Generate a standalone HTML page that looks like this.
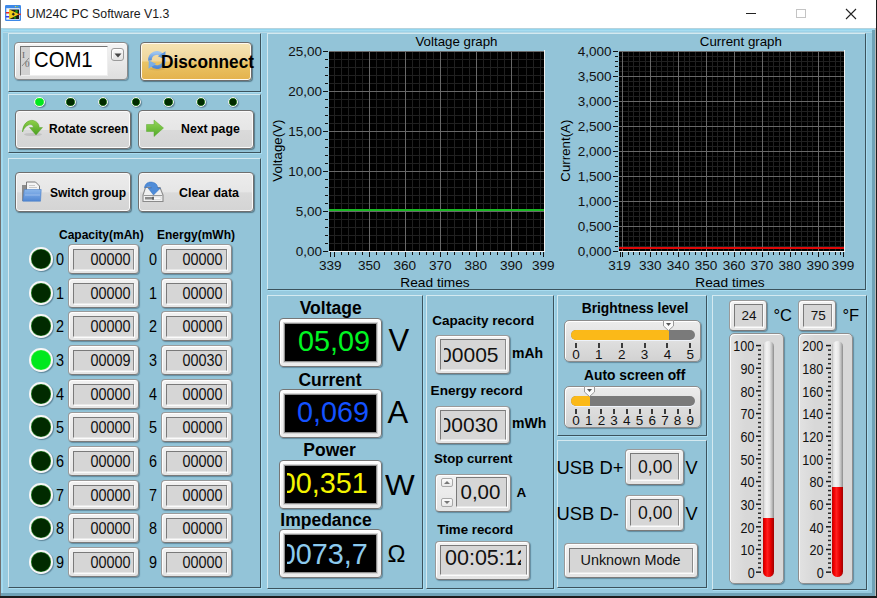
<!DOCTYPE html><html><head><meta charset="utf-8"><style>
*{margin:0;padding:0;box-sizing:border-box}
html,body{width:877px;height:598px;overflow:hidden;background:#fff;font-family:"Liberation Sans",sans-serif}
.t{position:absolute;white-space:nowrap;line-height:1}
.pn{position:absolute;background:#93c4d8;border-top:1px solid #d4e9f0;border-left:1px solid #d4e9f0;border-right:1px solid #3c535d;border-bottom:1px solid #3c535d;box-shadow:1px 1px 0 #a8dcf0}
.btn{position:absolute;border:1px solid #6f6f6f;border-radius:4px;background:linear-gradient(#ececec 0%,#e6e6e6 50%,#dadada 52%,#d4d4d4 100%);box-shadow:inset 0 0 0 1px #fafafa, 1px 1px 1px rgba(30,50,60,.5)}
.nb{position:absolute;border:1px solid;border-color:#9a9a9a #888 #7a7a7a #9a9a9a;border-radius:4px;background:linear-gradient(#f2f2f2,#e4e4e4);box-shadow:inset 1px 1px 0 #fff,1px 1px 1px rgba(40,70,90,.45)}
.nbi{position:absolute;background:#d6d6d6;border-top:1px solid #7a7a7a;border-left:1px solid #7a7a7a;border-right:1px solid #8a8a8a;border-bottom:1px solid #e8e8e8;box-shadow:1px 1px 0 #fbfbfb}
.led{position:absolute;border-radius:50%;border:1.5px solid #f6f6f6}
svg{position:absolute;left:0;top:0}
</style></head><body>
<div style="position:absolute;left:0;top:28px;width:877px;height:570px;background:#97cadf"></div>
<div style="position:absolute;left:0;top:0;width:1px;height:596px;background:#707070"></div>
<div style="position:absolute;left:876px;top:0;width:1px;height:598px;background:#1c1c1c"></div>
<div style="position:absolute;left:875px;top:28px;width:1px;height:568px;background:#b8b8b8"></div>
<div style="position:absolute;left:1px;top:28px;width:874px;height:5px;background:linear-gradient(#b6d2dc 0,#b6d2dc 1px,#92d6f0 1px,#92d6f0 2px,#a6dcf0 2px,#a6dcf0 3px,#9cd2e8 3px,#9cd2e8 4px,#b4d8e6 4px)"></div>
<div style="position:absolute;left:1px;top:28px;width:2px;height:568px;background:#a2daf0"></div>
<div style="position:absolute;left:872px;top:30px;width:3px;height:566px;background:#6fa2b6"></div>
<div style="position:absolute;left:1px;top:593px;width:874px;height:3px;background:#6fa2b6"></div>
<div style="position:absolute;left:0;top:596px;width:877px;height:2px;background:#1c1c1c"></div>
<svg width="16" height="16" style="left:5px;top:5px" viewBox="0 0 16 16"><rect x="0" y="0" width="16" height="16" rx="1.2" fill="#3d88e8"/><rect x="1.3" y="3.2" width="13.4" height="11.5" fill="#f0f6fd"/><circle cx="10.5" cy="1.6" r="0.7" fill="#e8e040"/><circle cx="12.5" cy="1.6" r="0.7" fill="#80d040"/><rect x="4.5" y="4.5" width="9.5" height="9.5" fill="#1c1c1c"/><circle cx="11.5" cy="6.5" r="1.4" fill="#1a8a1a"/><circle cx="10" cy="12.8" r="1.2" fill="#1a8a1a"/><path d="M4 4.3 L14.2 9.2 L4 14.2Z" fill="#f0cc18"/><path d="M8.3 7.6 L9.9 9.2 L8.3 10.8 L6.7 9.2Z" fill="#222"/><rect x="0.8" y="7" width="3.4" height="1.5" fill="#e82828"/><rect x="0.8" y="11" width="3.4" height="1.5" fill="#3838e8"/><rect x="13.4" y="8.6" width="2.4" height="1.5" fill="#e82828"/></svg>
<div class="t" style="left:26.5px;top:8.19px;font-size:12.3px;font-weight:normal;color:#1a1a1a;">UM24C PC Software V1.3</div>
<div style="position:absolute;left:746px;top:13px;width:10px;height:1px;background:#222"></div>
<div style="position:absolute;left:796px;top:9px;width:10px;height:9px;border:1px solid #c4c4c4"></div>
<svg width="12" height="12" style="left:845px;top:8px" viewBox="0 0 12 12"><path d="M1 1 L11 11 M11 1 L1 11" stroke="#222" stroke-width="1.1"/></svg>
<div class="pn" style="left:8px;top:33px;width:253px;height:59px"></div>
<div class="pn" style="left:8px;top:94px;width:253px;height:59px"></div>
<div class="pn" style="left:8px;top:158px;width:253px;height:430px"></div>
<div class="pn" style="left:267px;top:33px;width:599px;height:257px"></div>
<div class="pn" style="left:267px;top:295px;width:156px;height:294px"></div>
<div class="pn" style="left:426px;top:295px;width:128px;height:294px"></div>
<div class="pn" style="left:557px;top:295px;width:150px;height:141px"></div>
<div class="pn" style="left:557px;top:440px;width:150px;height:148px"></div>
<div class="pn" style="left:712px;top:295px;width:155px;height:295px"></div>
<div style="position:absolute;left:14px;top:42px;width:114px;height:38px;border:1px solid #8a8a8a;border-radius:4px;background:linear-gradient(#f4f4f4,#dedede);box-shadow:inset 1px 1px 0 #fff,1px 1px 1px rgba(40,70,90,.45)"></div>
<div style="position:absolute;left:20px;top:46px;width:88px;height:30px;background:#fff;border-top:1px solid #747474;border-left:1px solid #747474;border-right:1px solid #eee;border-bottom:1px solid #eee"></div>
<div style="position:absolute;left:21px;top:47px;width:9px;height:28px;background:#d2d2d2"></div>
<div class="t" style="left:22px;top:51px;font-family:'Liberation Serif',serif;font-size:9px;color:#666;line-height:1">I</div>
<svg width="10" height="14" style="left:21px;top:55px"><path d="M1 11 L8 3" stroke="#777" stroke-width="0.8"/></svg>
<div class="t" style="left:25px;top:60px;font-family:'Liberation Serif',serif;font-size:9px;color:#666;line-height:1">0</div>
<div class="t" style="left:33.5px;top:49.44px;font-size:22.4px;font-weight:normal;color:#000;transform:scaleX(0.905);transform-origin:left;">COM1</div>
<div style="position:absolute;left:111px;top:48px;width:13px;height:13px;border:1px solid #9a9a9a;border-radius:3px;background:linear-gradient(#fafafa,#e2e2e2);box-shadow:inset 1px 1px 0 #fff"></div>
<svg width="8" height="5" style="left:114px;top:53px"><path d="M0.5 0.5 L7.5 0.5 L4 4.5Z" fill="#444"/></svg>
<div style="position:absolute;left:140px;top:42px;width:112px;height:39px;border:1px solid #6c6c6c;border-radius:4px;background:linear-gradient(#f5e4b4 0%,#f0d69c 48%,#eac466 52%,#e4b24c 100%);box-shadow:inset 0 0 0 1px #fffaf0,1px 1px 1px rgba(30,50,60,.5)"></div>
<svg width="24" height="24" style="left:145px;top:48px" viewBox="0 0 24 24">
<defs><linearGradient id="rg" x1="0" y1="0" x2="0" y2="1"><stop offset="0" stop-color="#9cc4f0"/><stop offset="1" stop-color="#4f88d6"/></linearGradient></defs>
<ellipse cx="12" cy="21" rx="8" ry="1.5" fill="rgba(120,80,0,0.12)"/>
<path d="M5 12.5 A7 7 0 0 1 17.2 7.3" fill="none" stroke="url(#rg)" stroke-width="3.6"/>
<path d="M20.5 3.2 L20.2 11.5 L12.8 8.2Z" fill="#5f96dc"/>
<path d="M19 11.5 A7 7 0 0 1 6.8 16.7" fill="none" stroke="url(#rg)" stroke-width="3.6"/>
<path d="M3.5 20.8 L3.8 12.5 L11.2 15.8Z" fill="#7aaee6"/>
</svg>
<div class="t" style="left:161px;top:54.03px;font-size:17.8px;font-weight:bold;color:#000;transform:scaleX(0.97);transform-origin:left;">Disconnect</div>
<div class="led" style="left:34.0px;top:96.8px;width:10.5px;height:10.5px;background:#00e81e;border-width:1.5px;box-shadow:inset 0 0 0 0.6px #40f040,1px 1px 1px rgba(30,60,80,.45)"></div>
<div class="led" style="left:65.0px;top:96.8px;width:10.5px;height:10.5px;background:#012a00;border-width:1.5px;box-shadow:inset 0 0 0 0.6px #2a9a2a,1px 1px 1px rgba(30,60,80,.45)"></div>
<div class="led" style="left:97.8px;top:96.8px;width:10.5px;height:10.5px;background:#012a00;border-width:1.5px;box-shadow:inset 0 0 0 0.6px #2a9a2a,1px 1px 1px rgba(30,60,80,.45)"></div>
<div class="led" style="left:130.6px;top:96.8px;width:10.5px;height:10.5px;background:#012a00;border-width:1.5px;box-shadow:inset 0 0 0 0.6px #2a9a2a,1px 1px 1px rgba(30,60,80,.45)"></div>
<div class="led" style="left:163.1px;top:96.8px;width:10.5px;height:10.5px;background:#012a00;border-width:1.5px;box-shadow:inset 0 0 0 0.6px #2a9a2a,1px 1px 1px rgba(30,60,80,.45)"></div>
<div class="led" style="left:195.8px;top:96.8px;width:10.5px;height:10.5px;background:#012a00;border-width:1.5px;box-shadow:inset 0 0 0 0.6px #2a9a2a,1px 1px 1px rgba(30,60,80,.45)"></div>
<div class="led" style="left:227.8px;top:96.8px;width:10.5px;height:10.5px;background:#012a00;border-width:1.5px;box-shadow:inset 0 0 0 0.6px #2a9a2a,1px 1px 1px rgba(30,60,80,.45)"></div>
<div class="btn" style="left:15px;top:110px;width:116px;height:39px"></div>
<div class="btn" style="left:138px;top:110px;width:116px;height:39px"></div>
<svg width="24" height="20" style="left:20px;top:117px" viewBox="0 0 24 20">
<defs><linearGradient id="gg" x1="0" y1="0" x2="0" y2="1"><stop offset="0" stop-color="#8ed04a"/><stop offset="1" stop-color="#4aa020"/></linearGradient></defs>
<ellipse cx="13" cy="17.5" rx="9" ry="1.6" fill="rgba(0,0,0,0.10)"/>
<path d="M2.5 15 C2.5 7 8 2.5 13.5 3.5 C17 4.2 19 7 19.3 10.5 L22.5 10.5 L16 18 L9.5 10.5 L13.5 10.5 C13 8 11 7 8.5 8 C6 9 3.8 11.5 2.5 15Z" fill="url(#gg)" stroke="#4e9a22" stroke-width="0.4"/>
</svg>
<div class="t" style="left:49px;top:122.84px;font-size:12px;font-weight:bold;color:#000;">Rotate screen</div>
<svg width="20" height="19" style="left:145px;top:119px" viewBox="0 0 20 19">
<defs><linearGradient id="ng" x1="0" y1="0" x2="0" y2="1"><stop offset="0" stop-color="#96d65a"/><stop offset="1" stop-color="#52aa28"/></linearGradient></defs>
<path d="M1.5 5.5 L9 5.5 L9 1 L18.5 9 L9 17.5 L9 12.5 L1.5 12.5Z" fill="url(#ng)" stroke="#5aa830" stroke-width="0.5"/>
</svg>
<div class="t" style="left:181px;top:122.59px;font-size:12.3px;font-weight:bold;color:#000;">Next page</div>
<div class="btn" style="left:15px;top:172px;width:116px;height:40px"></div>
<div class="btn" style="left:138px;top:172px;width:116px;height:40px"></div>
<svg width="24" height="24" style="left:20px;top:180px" viewBox="0 0 24 24">
<defs><linearGradient id="fg" x1="0" y1="0" x2="0" y2="1"><stop offset="0" stop-color="#8ab6ea"/><stop offset="0.5" stop-color="#6d9ee0"/><stop offset="1" stop-color="#5187d2"/></linearGradient></defs>
<rect x="2" y="5" width="5" height="16" fill="#8c8c8c"/>
<path d="M6.5 2 L15.5 2 L19.5 6 L19.5 13 L6.5 13Z" fill="#f4f4f4" stroke="#6e6e6e" stroke-width="0.9"/>
<rect x="9" y="5" width="6" height="1" fill="#c8c8c8"/><rect x="9" y="7" width="8" height="1" fill="#c8c8c8"/>
<path d="M4.3 9.5 L21.2 9.5 L20.5 21.2 L2.8 21.2Z" fill="url(#fg)" stroke="#4a7fc8" stroke-width="0.6"/>
<rect x="5" y="14.5" width="15" height="1" fill="#a6c6f0" opacity="0.8"/>
</svg>
<div class="t" style="left:50px;top:186.84px;font-size:12px;font-weight:bold;color:#000;">Switch group</div>
<svg width="24" height="24" style="left:142px;top:179px" viewBox="0 0 24 24">
<path d="M3.5 8.5 L18 8.5 L21 16 L21 22.5 L1 22.5 L1 16Z" fill="#f0f0f0" stroke="#8a8a8a" stroke-width="1.1"/>
<rect x="1.5" y="16" width="19" height="1" fill="#9a9a9a"/>
<rect x="3" y="18" width="8" height="2.5" fill="#8a8a8a"/>
<rect x="11" y="18" width="8" height="2.5" fill="#fafafa" stroke="#bbb" stroke-width="0.4"/>
<rect x="10.5" y="17.8" width="1.2" height="3" fill="#333"/>
<path d="M2.5 9 C3 3 9 1.5 13.5 4.5 C15 5.5 15.5 7 15.8 9 L18.5 9 L11.5 16 L6 9 L9.5 9 C9 7.5 7 6.5 2.5 9Z" fill="#4f8cd8" stroke="#336fbf" stroke-width="0.5"/>
</svg>
<div class="t" style="left:179px;top:186.50px;font-size:12.4px;font-weight:bold;color:#000;">Clear data</div>
<div class="t" style="left:59px;top:228.64px;font-size:12px;font-weight:bold;color:#000;">Capacity(mAh)</div>
<div class="t" style="left:157px;top:228.64px;font-size:12px;font-weight:bold;color:#000;">Energy(mWh)</div>
<div class="led" style="left:29.0px;top:247.2px;width:23.5px;height:23.5px;background:#012a00;border-width:2px;box-shadow:inset 0 0 0 0.6px #2a9a2a,1px 1px 1px rgba(30,60,80,.45)"></div>
<div class="t" style="left:56px;top:252.06px;font-size:16px;font-weight:normal;color:#000;transform:scaleX(0.9);transform-origin:left;">0</div>
<div class="nb" style="left:68px;top:244px;width:71px;height:30px"></div>
<div class="nbi" style="left:73px;top:249px;width:61px;height:21px"></div>
<div class="t" style="right:747px;top:252.06px;font-size:16px;font-weight:normal;color:#111;text-align:right;transform:scaleX(0.9);transform-origin:right;">00000</div>
<div class="t" style="left:149px;top:252.06px;font-size:16px;font-weight:normal;color:#000;transform:scaleX(0.9);transform-origin:left;">0</div>
<div class="nb" style="left:161px;top:244px;width:71px;height:30px"></div>
<div class="nbi" style="left:166px;top:249px;width:61px;height:21px"></div>
<div class="t" style="right:654.5px;top:252.06px;font-size:16px;font-weight:normal;color:#111;text-align:right;transform:scaleX(0.9);transform-origin:right;">00000</div>
<div class="led" style="left:29.0px;top:281.2px;width:23.5px;height:23.5px;background:#012a00;border-width:2px;box-shadow:inset 0 0 0 0.6px #2a9a2a,1px 1px 1px rgba(30,60,80,.45)"></div>
<div class="t" style="left:56px;top:286.06px;font-size:16px;font-weight:normal;color:#000;transform:scaleX(0.9);transform-origin:left;">1</div>
<div class="nb" style="left:68px;top:278px;width:71px;height:30px"></div>
<div class="nbi" style="left:73px;top:283px;width:61px;height:21px"></div>
<div class="t" style="right:747px;top:286.06px;font-size:16px;font-weight:normal;color:#111;text-align:right;transform:scaleX(0.9);transform-origin:right;">00000</div>
<div class="t" style="left:149px;top:286.06px;font-size:16px;font-weight:normal;color:#000;transform:scaleX(0.9);transform-origin:left;">1</div>
<div class="nb" style="left:161px;top:278px;width:71px;height:30px"></div>
<div class="nbi" style="left:166px;top:283px;width:61px;height:21px"></div>
<div class="t" style="right:654.5px;top:286.06px;font-size:16px;font-weight:normal;color:#111;text-align:right;transform:scaleX(0.9);transform-origin:right;">00000</div>
<div class="led" style="left:29.0px;top:314.2px;width:23.5px;height:23.5px;background:#012a00;border-width:2px;box-shadow:inset 0 0 0 0.6px #2a9a2a,1px 1px 1px rgba(30,60,80,.45)"></div>
<div class="t" style="left:56px;top:319.06px;font-size:16px;font-weight:normal;color:#000;transform:scaleX(0.9);transform-origin:left;">2</div>
<div class="nb" style="left:68px;top:311px;width:71px;height:30px"></div>
<div class="nbi" style="left:73px;top:316px;width:61px;height:21px"></div>
<div class="t" style="right:747px;top:319.06px;font-size:16px;font-weight:normal;color:#111;text-align:right;transform:scaleX(0.9);transform-origin:right;">00000</div>
<div class="t" style="left:149px;top:319.06px;font-size:16px;font-weight:normal;color:#000;transform:scaleX(0.9);transform-origin:left;">2</div>
<div class="nb" style="left:161px;top:311px;width:71px;height:30px"></div>
<div class="nbi" style="left:166px;top:316px;width:61px;height:21px"></div>
<div class="t" style="right:654.5px;top:319.06px;font-size:16px;font-weight:normal;color:#111;text-align:right;transform:scaleX(0.9);transform-origin:right;">00000</div>
<div class="led" style="left:29.0px;top:348.2px;width:23.5px;height:23.5px;background:#00e81e;border-width:2px;box-shadow:inset 0 0 0 0.6px #40f040,1px 1px 1px rgba(30,60,80,.45)"></div>
<div class="t" style="left:56px;top:353.06px;font-size:16px;font-weight:normal;color:#000;transform:scaleX(0.9);transform-origin:left;">3</div>
<div class="nb" style="left:68px;top:345px;width:71px;height:30px"></div>
<div class="nbi" style="left:73px;top:350px;width:61px;height:21px"></div>
<div class="t" style="right:747px;top:353.06px;font-size:16px;font-weight:normal;color:#111;text-align:right;transform:scaleX(0.9);transform-origin:right;">00009</div>
<div class="t" style="left:149px;top:353.06px;font-size:16px;font-weight:normal;color:#000;transform:scaleX(0.9);transform-origin:left;">3</div>
<div class="nb" style="left:161px;top:345px;width:71px;height:30px"></div>
<div class="nbi" style="left:166px;top:350px;width:61px;height:21px"></div>
<div class="t" style="right:654.5px;top:353.06px;font-size:16px;font-weight:normal;color:#111;text-align:right;transform:scaleX(0.9);transform-origin:right;">00030</div>
<div class="led" style="left:29.0px;top:382.2px;width:23.5px;height:23.5px;background:#012a00;border-width:2px;box-shadow:inset 0 0 0 0.6px #2a9a2a,1px 1px 1px rgba(30,60,80,.45)"></div>
<div class="t" style="left:56px;top:387.06px;font-size:16px;font-weight:normal;color:#000;transform:scaleX(0.9);transform-origin:left;">4</div>
<div class="nb" style="left:68px;top:379px;width:71px;height:30px"></div>
<div class="nbi" style="left:73px;top:384px;width:61px;height:21px"></div>
<div class="t" style="right:747px;top:387.06px;font-size:16px;font-weight:normal;color:#111;text-align:right;transform:scaleX(0.9);transform-origin:right;">00000</div>
<div class="t" style="left:149px;top:387.06px;font-size:16px;font-weight:normal;color:#000;transform:scaleX(0.9);transform-origin:left;">4</div>
<div class="nb" style="left:161px;top:379px;width:71px;height:30px"></div>
<div class="nbi" style="left:166px;top:384px;width:61px;height:21px"></div>
<div class="t" style="right:654.5px;top:387.06px;font-size:16px;font-weight:normal;color:#111;text-align:right;transform:scaleX(0.9);transform-origin:right;">00000</div>
<div class="led" style="left:29.0px;top:415.2px;width:23.5px;height:23.5px;background:#012a00;border-width:2px;box-shadow:inset 0 0 0 0.6px #2a9a2a,1px 1px 1px rgba(30,60,80,.45)"></div>
<div class="t" style="left:56px;top:420.06px;font-size:16px;font-weight:normal;color:#000;transform:scaleX(0.9);transform-origin:left;">5</div>
<div class="nb" style="left:68px;top:412px;width:71px;height:30px"></div>
<div class="nbi" style="left:73px;top:417px;width:61px;height:21px"></div>
<div class="t" style="right:747px;top:420.06px;font-size:16px;font-weight:normal;color:#111;text-align:right;transform:scaleX(0.9);transform-origin:right;">00000</div>
<div class="t" style="left:149px;top:420.06px;font-size:16px;font-weight:normal;color:#000;transform:scaleX(0.9);transform-origin:left;">5</div>
<div class="nb" style="left:161px;top:412px;width:71px;height:30px"></div>
<div class="nbi" style="left:166px;top:417px;width:61px;height:21px"></div>
<div class="t" style="right:654.5px;top:420.06px;font-size:16px;font-weight:normal;color:#111;text-align:right;transform:scaleX(0.9);transform-origin:right;">00000</div>
<div class="led" style="left:29.0px;top:449.2px;width:23.5px;height:23.5px;background:#012a00;border-width:2px;box-shadow:inset 0 0 0 0.6px #2a9a2a,1px 1px 1px rgba(30,60,80,.45)"></div>
<div class="t" style="left:56px;top:454.06px;font-size:16px;font-weight:normal;color:#000;transform:scaleX(0.9);transform-origin:left;">6</div>
<div class="nb" style="left:68px;top:446px;width:71px;height:30px"></div>
<div class="nbi" style="left:73px;top:451px;width:61px;height:21px"></div>
<div class="t" style="right:747px;top:454.06px;font-size:16px;font-weight:normal;color:#111;text-align:right;transform:scaleX(0.9);transform-origin:right;">00000</div>
<div class="t" style="left:149px;top:454.06px;font-size:16px;font-weight:normal;color:#000;transform:scaleX(0.9);transform-origin:left;">6</div>
<div class="nb" style="left:161px;top:446px;width:71px;height:30px"></div>
<div class="nbi" style="left:166px;top:451px;width:61px;height:21px"></div>
<div class="t" style="right:654.5px;top:454.06px;font-size:16px;font-weight:normal;color:#111;text-align:right;transform:scaleX(0.9);transform-origin:right;">00000</div>
<div class="led" style="left:29.0px;top:483.2px;width:23.5px;height:23.5px;background:#012a00;border-width:2px;box-shadow:inset 0 0 0 0.6px #2a9a2a,1px 1px 1px rgba(30,60,80,.45)"></div>
<div class="t" style="left:56px;top:488.06px;font-size:16px;font-weight:normal;color:#000;transform:scaleX(0.9);transform-origin:left;">7</div>
<div class="nb" style="left:68px;top:480px;width:71px;height:30px"></div>
<div class="nbi" style="left:73px;top:485px;width:61px;height:21px"></div>
<div class="t" style="right:747px;top:488.06px;font-size:16px;font-weight:normal;color:#111;text-align:right;transform:scaleX(0.9);transform-origin:right;">00000</div>
<div class="t" style="left:149px;top:488.06px;font-size:16px;font-weight:normal;color:#000;transform:scaleX(0.9);transform-origin:left;">7</div>
<div class="nb" style="left:161px;top:480px;width:71px;height:30px"></div>
<div class="nbi" style="left:166px;top:485px;width:61px;height:21px"></div>
<div class="t" style="right:654.5px;top:488.06px;font-size:16px;font-weight:normal;color:#111;text-align:right;transform:scaleX(0.9);transform-origin:right;">00000</div>
<div class="led" style="left:29.0px;top:516.2px;width:23.5px;height:23.5px;background:#012a00;border-width:2px;box-shadow:inset 0 0 0 0.6px #2a9a2a,1px 1px 1px rgba(30,60,80,.45)"></div>
<div class="t" style="left:56px;top:521.06px;font-size:16px;font-weight:normal;color:#000;transform:scaleX(0.9);transform-origin:left;">8</div>
<div class="nb" style="left:68px;top:513px;width:71px;height:30px"></div>
<div class="nbi" style="left:73px;top:518px;width:61px;height:21px"></div>
<div class="t" style="right:747px;top:521.06px;font-size:16px;font-weight:normal;color:#111;text-align:right;transform:scaleX(0.9);transform-origin:right;">00000</div>
<div class="t" style="left:149px;top:521.06px;font-size:16px;font-weight:normal;color:#000;transform:scaleX(0.9);transform-origin:left;">8</div>
<div class="nb" style="left:161px;top:513px;width:71px;height:30px"></div>
<div class="nbi" style="left:166px;top:518px;width:61px;height:21px"></div>
<div class="t" style="right:654.5px;top:521.06px;font-size:16px;font-weight:normal;color:#111;text-align:right;transform:scaleX(0.9);transform-origin:right;">00000</div>
<div class="led" style="left:29.0px;top:550.2px;width:23.5px;height:23.5px;background:#012a00;border-width:2px;box-shadow:inset 0 0 0 0.6px #2a9a2a,1px 1px 1px rgba(30,60,80,.45)"></div>
<div class="t" style="left:56px;top:555.06px;font-size:16px;font-weight:normal;color:#000;transform:scaleX(0.9);transform-origin:left;">9</div>
<div class="nb" style="left:68px;top:547px;width:71px;height:30px"></div>
<div class="nbi" style="left:73px;top:552px;width:61px;height:21px"></div>
<div class="t" style="right:747px;top:555.06px;font-size:16px;font-weight:normal;color:#111;text-align:right;transform:scaleX(0.9);transform-origin:right;">00000</div>
<div class="t" style="left:149px;top:555.06px;font-size:16px;font-weight:normal;color:#000;transform:scaleX(0.9);transform-origin:left;">9</div>
<div class="nb" style="left:161px;top:547px;width:71px;height:30px"></div>
<div class="nbi" style="left:166px;top:552px;width:61px;height:21px"></div>
<div class="t" style="right:654.5px;top:555.06px;font-size:16px;font-weight:normal;color:#111;text-align:right;transform:scaleX(0.9);transform-origin:right;">00000</div>
<svg width="877" height="598" style="left:0;top:0" shape-rendering="crispEdges">
<rect x="329" y="51" width="215" height="200" fill="#000"/>
<rect x="334" y="51" width="1" height="200" fill="#202020"/>
<rect x="341" y="51" width="1" height="200" fill="#202020"/>
<rect x="348" y="51" width="1" height="200" fill="#202020"/>
<rect x="355" y="51" width="1" height="200" fill="#202020"/>
<rect x="362" y="51" width="1" height="200" fill="#202020"/>
<rect x="369" y="51" width="1" height="200" fill="#202020"/>
<rect x="376" y="51" width="1" height="200" fill="#202020"/>
<rect x="384" y="51" width="1" height="200" fill="#202020"/>
<rect x="391" y="51" width="1" height="200" fill="#202020"/>
<rect x="398" y="51" width="1" height="200" fill="#202020"/>
<rect x="405" y="51" width="1" height="200" fill="#202020"/>
<rect x="412" y="51" width="1" height="200" fill="#202020"/>
<rect x="419" y="51" width="1" height="200" fill="#202020"/>
<rect x="426" y="51" width="1" height="200" fill="#202020"/>
<rect x="433" y="51" width="1" height="200" fill="#202020"/>
<rect x="440" y="51" width="1" height="200" fill="#202020"/>
<rect x="447" y="51" width="1" height="200" fill="#202020"/>
<rect x="454" y="51" width="1" height="200" fill="#202020"/>
<rect x="462" y="51" width="1" height="200" fill="#202020"/>
<rect x="469" y="51" width="1" height="200" fill="#202020"/>
<rect x="476" y="51" width="1" height="200" fill="#202020"/>
<rect x="483" y="51" width="1" height="200" fill="#202020"/>
<rect x="490" y="51" width="1" height="200" fill="#202020"/>
<rect x="497" y="51" width="1" height="200" fill="#202020"/>
<rect x="504" y="51" width="1" height="200" fill="#202020"/>
<rect x="511" y="51" width="1" height="200" fill="#202020"/>
<rect x="518" y="51" width="1" height="200" fill="#202020"/>
<rect x="526" y="51" width="1" height="200" fill="#202020"/>
<rect x="533" y="51" width="1" height="200" fill="#202020"/>
<rect x="540" y="51" width="1" height="200" fill="#202020"/>
<rect x="329" y="243" width="215" height="1" fill="#202020"/>
<rect x="329" y="235" width="215" height="1" fill="#202020"/>
<rect x="329" y="227" width="215" height="1" fill="#202020"/>
<rect x="329" y="219" width="215" height="1" fill="#202020"/>
<rect x="329" y="211" width="215" height="1" fill="#202020"/>
<rect x="329" y="203" width="215" height="1" fill="#202020"/>
<rect x="329" y="195" width="215" height="1" fill="#202020"/>
<rect x="329" y="187" width="215" height="1" fill="#202020"/>
<rect x="329" y="179" width="215" height="1" fill="#202020"/>
<rect x="329" y="171" width="215" height="1" fill="#202020"/>
<rect x="329" y="163" width="215" height="1" fill="#202020"/>
<rect x="329" y="155" width="215" height="1" fill="#202020"/>
<rect x="329" y="147" width="215" height="1" fill="#202020"/>
<rect x="329" y="139" width="215" height="1" fill="#202020"/>
<rect x="329" y="131" width="215" height="1" fill="#202020"/>
<rect x="329" y="123" width="215" height="1" fill="#202020"/>
<rect x="329" y="115" width="215" height="1" fill="#202020"/>
<rect x="329" y="107" width="215" height="1" fill="#202020"/>
<rect x="329" y="99" width="215" height="1" fill="#202020"/>
<rect x="329" y="91" width="215" height="1" fill="#202020"/>
<rect x="329" y="83" width="215" height="1" fill="#202020"/>
<rect x="329" y="75" width="215" height="1" fill="#202020"/>
<rect x="329" y="67" width="215" height="1" fill="#202020"/>
<rect x="329" y="59" width="215" height="1" fill="#202020"/>
<rect x="329" y="51" width="215" height="1" fill="#202020"/>
<rect x="369" y="51" width="1" height="200" fill="#686868"/>
<rect x="405" y="51" width="1" height="200" fill="#686868"/>
<rect x="440" y="51" width="1" height="200" fill="#686868"/>
<rect x="476" y="51" width="1" height="200" fill="#686868"/>
<rect x="511" y="51" width="1" height="200" fill="#686868"/>
<rect x="329" y="211" width="215" height="1" fill="#686868"/>
<rect x="329" y="171" width="215" height="1" fill="#686868"/>
<rect x="329" y="131" width="215" height="1" fill="#686868"/>
<rect x="329" y="91" width="215" height="1" fill="#686868"/>
<rect x="329" y="51" width="215" height="1" fill="#686868"/>
<rect x="329" y="209" width="215" height="2" fill="#18b822"/>
<rect x="329" y="251" width="216" height="1" fill="#f0f0f0"/>
<rect x="544" y="50" width="1" height="202" fill="#f0f0f0"/>
<rect x="325" y="251" width="3" height="1" fill="#111"/>
<rect x="325" y="243" width="3" height="1" fill="#111"/>
<rect x="325" y="235" width="3" height="1" fill="#111"/>
<rect x="325" y="227" width="3" height="1" fill="#111"/>
<rect x="325" y="219" width="3" height="1" fill="#111"/>
<rect x="325" y="211" width="3" height="1" fill="#111"/>
<rect x="325" y="203" width="3" height="1" fill="#111"/>
<rect x="325" y="195" width="3" height="1" fill="#111"/>
<rect x="325" y="187" width="3" height="1" fill="#111"/>
<rect x="325" y="179" width="3" height="1" fill="#111"/>
<rect x="325" y="171" width="3" height="1" fill="#111"/>
<rect x="325" y="163" width="3" height="1" fill="#111"/>
<rect x="325" y="155" width="3" height="1" fill="#111"/>
<rect x="325" y="147" width="3" height="1" fill="#111"/>
<rect x="325" y="139" width="3" height="1" fill="#111"/>
<rect x="325" y="131" width="3" height="1" fill="#111"/>
<rect x="325" y="123" width="3" height="1" fill="#111"/>
<rect x="325" y="115" width="3" height="1" fill="#111"/>
<rect x="325" y="107" width="3" height="1" fill="#111"/>
<rect x="325" y="99" width="3" height="1" fill="#111"/>
<rect x="325" y="91" width="3" height="1" fill="#111"/>
<rect x="325" y="83" width="3" height="1" fill="#111"/>
<rect x="325" y="75" width="3" height="1" fill="#111"/>
<rect x="325" y="67" width="3" height="1" fill="#111"/>
<rect x="325" y="59" width="3" height="1" fill="#111"/>
<rect x="325" y="51" width="3" height="1" fill="#111"/>
<rect x="323" y="251" width="5" height="1" fill="#111"/>
<rect x="323" y="211" width="5" height="1" fill="#111"/>
<rect x="323" y="171" width="5" height="1" fill="#111"/>
<rect x="323" y="131" width="5" height="1" fill="#111"/>
<rect x="323" y="91" width="5" height="1" fill="#111"/>
<rect x="323" y="51" width="5" height="1" fill="#111"/>
<rect x="334" y="252" width="1" height="3" fill="#111"/>
<rect x="341" y="252" width="1" height="3" fill="#111"/>
<rect x="348" y="252" width="1" height="3" fill="#111"/>
<rect x="355" y="252" width="1" height="3" fill="#111"/>
<rect x="362" y="252" width="1" height="3" fill="#111"/>
<rect x="369" y="252" width="1" height="3" fill="#111"/>
<rect x="376" y="252" width="1" height="3" fill="#111"/>
<rect x="384" y="252" width="1" height="3" fill="#111"/>
<rect x="391" y="252" width="1" height="3" fill="#111"/>
<rect x="398" y="252" width="1" height="3" fill="#111"/>
<rect x="405" y="252" width="1" height="3" fill="#111"/>
<rect x="412" y="252" width="1" height="3" fill="#111"/>
<rect x="419" y="252" width="1" height="3" fill="#111"/>
<rect x="426" y="252" width="1" height="3" fill="#111"/>
<rect x="433" y="252" width="1" height="3" fill="#111"/>
<rect x="440" y="252" width="1" height="3" fill="#111"/>
<rect x="447" y="252" width="1" height="3" fill="#111"/>
<rect x="454" y="252" width="1" height="3" fill="#111"/>
<rect x="462" y="252" width="1" height="3" fill="#111"/>
<rect x="469" y="252" width="1" height="3" fill="#111"/>
<rect x="476" y="252" width="1" height="3" fill="#111"/>
<rect x="483" y="252" width="1" height="3" fill="#111"/>
<rect x="490" y="252" width="1" height="3" fill="#111"/>
<rect x="497" y="252" width="1" height="3" fill="#111"/>
<rect x="504" y="252" width="1" height="3" fill="#111"/>
<rect x="511" y="252" width="1" height="3" fill="#111"/>
<rect x="518" y="252" width="1" height="3" fill="#111"/>
<rect x="526" y="252" width="1" height="3" fill="#111"/>
<rect x="533" y="252" width="1" height="3" fill="#111"/>
<rect x="540" y="252" width="1" height="3" fill="#111"/>
<rect x="330" y="252" width="1" height="5" fill="#111"/>
<rect x="369" y="252" width="1" height="5" fill="#111"/>
<rect x="405" y="252" width="1" height="5" fill="#111"/>
<rect x="440" y="252" width="1" height="5" fill="#111"/>
<rect x="476" y="252" width="1" height="5" fill="#111"/>
<rect x="511" y="252" width="1" height="5" fill="#111"/>
<rect x="543" y="252" width="1" height="5" fill="#111"/>
<rect x="334" y="252" width="1" height="5" fill="#111"/>
</svg>
<div class="t" style="right:555px;top:245.17px;font-size:13.5px;font-weight:normal;color:#111;text-align:right;">0,00</div>
<div class="t" style="right:555px;top:205.17px;font-size:13.5px;font-weight:normal;color:#111;text-align:right;">5,00</div>
<div class="t" style="right:555px;top:165.17px;font-size:13.5px;font-weight:normal;color:#111;text-align:right;">10,00</div>
<div class="t" style="right:555px;top:125.17px;font-size:13.5px;font-weight:normal;color:#111;text-align:right;">15,00</div>
<div class="t" style="right:555px;top:85.17px;font-size:13.5px;font-weight:normal;color:#111;text-align:right;">20,00</div>
<div class="t" style="right:555px;top:45.17px;font-size:13.5px;font-weight:normal;color:#111;text-align:right;">25,00</div>
<div class="t" style="left:130.25px;width:400px;top:259.09px;font-size:13.6px;font-weight:normal;color:#111;text-align:center;">339</div>
<div class="t" style="left:169.3px;width:400px;top:259.09px;font-size:13.6px;font-weight:normal;color:#111;text-align:center;">350</div>
<div class="t" style="left:204.8px;width:400px;top:259.09px;font-size:13.6px;font-weight:normal;color:#111;text-align:center;">360</div>
<div class="t" style="left:240.3px;width:400px;top:259.09px;font-size:13.6px;font-weight:normal;color:#111;text-align:center;">370</div>
<div class="t" style="left:275.8px;width:400px;top:259.09px;font-size:13.6px;font-weight:normal;color:#111;text-align:center;">380</div>
<div class="t" style="left:311.3px;width:400px;top:259.09px;font-size:13.6px;font-weight:normal;color:#111;text-align:center;">390</div>
<div class="t" style="left:343.25px;width:400px;top:259.09px;font-size:13.6px;font-weight:normal;color:#111;text-align:center;">399</div>
<div class="t" style="left:256.5px;width:400px;top:35.04px;font-size:13.3px;font-weight:normal;color:#000;text-align:center;">Voltage graph</div>
<div class="t" style="left:234.60000000000002px;width:400px;top:276.43px;font-size:13.2px;font-weight:normal;color:#000;text-align:center;transform:scaleX(1.04);transform-origin:center;">Read times</div>
<div class="t" style="left:227.5px;top:143.5px;width:100px;text-align:center;font-size:13.3px;transform:rotate(-90deg)">Voltage(V)</div>
<svg width="877" height="598" style="left:0;top:0" shape-rendering="crispEdges">
<rect x="619" y="51" width="225" height="200" fill="#000"/>
<rect x="622" y="51" width="1" height="200" fill="#202020"/>
<rect x="628" y="51" width="1" height="200" fill="#202020"/>
<rect x="633" y="51" width="1" height="200" fill="#202020"/>
<rect x="639" y="51" width="1" height="200" fill="#202020"/>
<rect x="645" y="51" width="1" height="200" fill="#202020"/>
<rect x="650" y="51" width="1" height="200" fill="#202020"/>
<rect x="656" y="51" width="1" height="200" fill="#202020"/>
<rect x="661" y="51" width="1" height="200" fill="#202020"/>
<rect x="667" y="51" width="1" height="200" fill="#202020"/>
<rect x="673" y="51" width="1" height="200" fill="#202020"/>
<rect x="678" y="51" width="1" height="200" fill="#202020"/>
<rect x="684" y="51" width="1" height="200" fill="#202020"/>
<rect x="689" y="51" width="1" height="200" fill="#202020"/>
<rect x="695" y="51" width="1" height="200" fill="#202020"/>
<rect x="701" y="51" width="1" height="200" fill="#202020"/>
<rect x="706" y="51" width="1" height="200" fill="#202020"/>
<rect x="712" y="51" width="1" height="200" fill="#202020"/>
<rect x="717" y="51" width="1" height="200" fill="#202020"/>
<rect x="723" y="51" width="1" height="200" fill="#202020"/>
<rect x="728" y="51" width="1" height="200" fill="#202020"/>
<rect x="734" y="51" width="1" height="200" fill="#202020"/>
<rect x="740" y="51" width="1" height="200" fill="#202020"/>
<rect x="745" y="51" width="1" height="200" fill="#202020"/>
<rect x="751" y="51" width="1" height="200" fill="#202020"/>
<rect x="756" y="51" width="1" height="200" fill="#202020"/>
<rect x="762" y="51" width="1" height="200" fill="#202020"/>
<rect x="768" y="51" width="1" height="200" fill="#202020"/>
<rect x="773" y="51" width="1" height="200" fill="#202020"/>
<rect x="779" y="51" width="1" height="200" fill="#202020"/>
<rect x="784" y="51" width="1" height="200" fill="#202020"/>
<rect x="790" y="51" width="1" height="200" fill="#202020"/>
<rect x="795" y="51" width="1" height="200" fill="#202020"/>
<rect x="801" y="51" width="1" height="200" fill="#202020"/>
<rect x="807" y="51" width="1" height="200" fill="#202020"/>
<rect x="812" y="51" width="1" height="200" fill="#202020"/>
<rect x="818" y="51" width="1" height="200" fill="#202020"/>
<rect x="823" y="51" width="1" height="200" fill="#202020"/>
<rect x="829" y="51" width="1" height="200" fill="#202020"/>
<rect x="835" y="51" width="1" height="200" fill="#202020"/>
<rect x="840" y="51" width="1" height="200" fill="#202020"/>
<rect x="619" y="246" width="225" height="1" fill="#202020"/>
<rect x="619" y="241" width="225" height="1" fill="#202020"/>
<rect x="619" y="236" width="225" height="1" fill="#202020"/>
<rect x="619" y="231" width="225" height="1" fill="#202020"/>
<rect x="619" y="226" width="225" height="1" fill="#202020"/>
<rect x="619" y="221" width="225" height="1" fill="#202020"/>
<rect x="619" y="216" width="225" height="1" fill="#202020"/>
<rect x="619" y="211" width="225" height="1" fill="#202020"/>
<rect x="619" y="206" width="225" height="1" fill="#202020"/>
<rect x="619" y="201" width="225" height="1" fill="#202020"/>
<rect x="619" y="196" width="225" height="1" fill="#202020"/>
<rect x="619" y="191" width="225" height="1" fill="#202020"/>
<rect x="619" y="186" width="225" height="1" fill="#202020"/>
<rect x="619" y="181" width="225" height="1" fill="#202020"/>
<rect x="619" y="176" width="225" height="1" fill="#202020"/>
<rect x="619" y="171" width="225" height="1" fill="#202020"/>
<rect x="619" y="166" width="225" height="1" fill="#202020"/>
<rect x="619" y="161" width="225" height="1" fill="#202020"/>
<rect x="619" y="156" width="225" height="1" fill="#202020"/>
<rect x="619" y="151" width="225" height="1" fill="#202020"/>
<rect x="619" y="146" width="225" height="1" fill="#202020"/>
<rect x="619" y="141" width="225" height="1" fill="#202020"/>
<rect x="619" y="136" width="225" height="1" fill="#202020"/>
<rect x="619" y="131" width="225" height="1" fill="#202020"/>
<rect x="619" y="126" width="225" height="1" fill="#202020"/>
<rect x="619" y="121" width="225" height="1" fill="#202020"/>
<rect x="619" y="116" width="225" height="1" fill="#202020"/>
<rect x="619" y="111" width="225" height="1" fill="#202020"/>
<rect x="619" y="106" width="225" height="1" fill="#202020"/>
<rect x="619" y="101" width="225" height="1" fill="#202020"/>
<rect x="619" y="96" width="225" height="1" fill="#202020"/>
<rect x="619" y="91" width="225" height="1" fill="#202020"/>
<rect x="619" y="86" width="225" height="1" fill="#202020"/>
<rect x="619" y="81" width="225" height="1" fill="#202020"/>
<rect x="619" y="76" width="225" height="1" fill="#202020"/>
<rect x="619" y="71" width="225" height="1" fill="#202020"/>
<rect x="619" y="66" width="225" height="1" fill="#202020"/>
<rect x="619" y="61" width="225" height="1" fill="#202020"/>
<rect x="619" y="56" width="225" height="1" fill="#202020"/>
<rect x="619" y="51" width="225" height="1" fill="#202020"/>
<rect x="622" y="51" width="1" height="200" fill="#686868"/>
<rect x="650" y="51" width="1" height="200" fill="#686868"/>
<rect x="678" y="51" width="1" height="200" fill="#686868"/>
<rect x="706" y="51" width="1" height="200" fill="#686868"/>
<rect x="734" y="51" width="1" height="200" fill="#686868"/>
<rect x="762" y="51" width="1" height="200" fill="#686868"/>
<rect x="790" y="51" width="1" height="200" fill="#686868"/>
<rect x="818" y="51" width="1" height="200" fill="#686868"/>
<rect x="619" y="226" width="225" height="1" fill="#686868"/>
<rect x="619" y="201" width="225" height="1" fill="#686868"/>
<rect x="619" y="176" width="225" height="1" fill="#686868"/>
<rect x="619" y="151" width="225" height="1" fill="#686868"/>
<rect x="619" y="126" width="225" height="1" fill="#686868"/>
<rect x="619" y="101" width="225" height="1" fill="#686868"/>
<rect x="619" y="76" width="225" height="1" fill="#686868"/>
<rect x="619" y="51" width="225" height="1" fill="#686868"/>
<rect x="619" y="247" width="225" height="2" fill="#e00808"/>
<rect x="619" y="251" width="226" height="1" fill="#f0f0f0"/>
<rect x="844" y="50" width="1" height="202" fill="#f0f0f0"/>
<rect x="615" y="251" width="3" height="1" fill="#111"/>
<rect x="615" y="246" width="3" height="1" fill="#111"/>
<rect x="615" y="241" width="3" height="1" fill="#111"/>
<rect x="615" y="236" width="3" height="1" fill="#111"/>
<rect x="615" y="231" width="3" height="1" fill="#111"/>
<rect x="615" y="226" width="3" height="1" fill="#111"/>
<rect x="615" y="221" width="3" height="1" fill="#111"/>
<rect x="615" y="216" width="3" height="1" fill="#111"/>
<rect x="615" y="211" width="3" height="1" fill="#111"/>
<rect x="615" y="206" width="3" height="1" fill="#111"/>
<rect x="615" y="201" width="3" height="1" fill="#111"/>
<rect x="615" y="196" width="3" height="1" fill="#111"/>
<rect x="615" y="191" width="3" height="1" fill="#111"/>
<rect x="615" y="186" width="3" height="1" fill="#111"/>
<rect x="615" y="181" width="3" height="1" fill="#111"/>
<rect x="615" y="176" width="3" height="1" fill="#111"/>
<rect x="615" y="171" width="3" height="1" fill="#111"/>
<rect x="615" y="166" width="3" height="1" fill="#111"/>
<rect x="615" y="161" width="3" height="1" fill="#111"/>
<rect x="615" y="156" width="3" height="1" fill="#111"/>
<rect x="615" y="151" width="3" height="1" fill="#111"/>
<rect x="615" y="146" width="3" height="1" fill="#111"/>
<rect x="615" y="141" width="3" height="1" fill="#111"/>
<rect x="615" y="136" width="3" height="1" fill="#111"/>
<rect x="615" y="131" width="3" height="1" fill="#111"/>
<rect x="615" y="126" width="3" height="1" fill="#111"/>
<rect x="615" y="121" width="3" height="1" fill="#111"/>
<rect x="615" y="116" width="3" height="1" fill="#111"/>
<rect x="615" y="111" width="3" height="1" fill="#111"/>
<rect x="615" y="106" width="3" height="1" fill="#111"/>
<rect x="615" y="101" width="3" height="1" fill="#111"/>
<rect x="615" y="96" width="3" height="1" fill="#111"/>
<rect x="615" y="91" width="3" height="1" fill="#111"/>
<rect x="615" y="86" width="3" height="1" fill="#111"/>
<rect x="615" y="81" width="3" height="1" fill="#111"/>
<rect x="615" y="76" width="3" height="1" fill="#111"/>
<rect x="615" y="71" width="3" height="1" fill="#111"/>
<rect x="615" y="66" width="3" height="1" fill="#111"/>
<rect x="615" y="61" width="3" height="1" fill="#111"/>
<rect x="615" y="56" width="3" height="1" fill="#111"/>
<rect x="615" y="51" width="3" height="1" fill="#111"/>
<rect x="613" y="251" width="5" height="1" fill="#111"/>
<rect x="613" y="226" width="5" height="1" fill="#111"/>
<rect x="613" y="201" width="5" height="1" fill="#111"/>
<rect x="613" y="176" width="5" height="1" fill="#111"/>
<rect x="613" y="151" width="5" height="1" fill="#111"/>
<rect x="613" y="126" width="5" height="1" fill="#111"/>
<rect x="613" y="101" width="5" height="1" fill="#111"/>
<rect x="613" y="76" width="5" height="1" fill="#111"/>
<rect x="613" y="51" width="5" height="1" fill="#111"/>
<rect x="622" y="252" width="1" height="3" fill="#111"/>
<rect x="628" y="252" width="1" height="3" fill="#111"/>
<rect x="633" y="252" width="1" height="3" fill="#111"/>
<rect x="639" y="252" width="1" height="3" fill="#111"/>
<rect x="645" y="252" width="1" height="3" fill="#111"/>
<rect x="650" y="252" width="1" height="3" fill="#111"/>
<rect x="656" y="252" width="1" height="3" fill="#111"/>
<rect x="661" y="252" width="1" height="3" fill="#111"/>
<rect x="667" y="252" width="1" height="3" fill="#111"/>
<rect x="673" y="252" width="1" height="3" fill="#111"/>
<rect x="678" y="252" width="1" height="3" fill="#111"/>
<rect x="684" y="252" width="1" height="3" fill="#111"/>
<rect x="689" y="252" width="1" height="3" fill="#111"/>
<rect x="695" y="252" width="1" height="3" fill="#111"/>
<rect x="701" y="252" width="1" height="3" fill="#111"/>
<rect x="706" y="252" width="1" height="3" fill="#111"/>
<rect x="712" y="252" width="1" height="3" fill="#111"/>
<rect x="717" y="252" width="1" height="3" fill="#111"/>
<rect x="723" y="252" width="1" height="3" fill="#111"/>
<rect x="728" y="252" width="1" height="3" fill="#111"/>
<rect x="734" y="252" width="1" height="3" fill="#111"/>
<rect x="740" y="252" width="1" height="3" fill="#111"/>
<rect x="745" y="252" width="1" height="3" fill="#111"/>
<rect x="751" y="252" width="1" height="3" fill="#111"/>
<rect x="756" y="252" width="1" height="3" fill="#111"/>
<rect x="762" y="252" width="1" height="3" fill="#111"/>
<rect x="768" y="252" width="1" height="3" fill="#111"/>
<rect x="773" y="252" width="1" height="3" fill="#111"/>
<rect x="779" y="252" width="1" height="3" fill="#111"/>
<rect x="784" y="252" width="1" height="3" fill="#111"/>
<rect x="790" y="252" width="1" height="3" fill="#111"/>
<rect x="795" y="252" width="1" height="3" fill="#111"/>
<rect x="801" y="252" width="1" height="3" fill="#111"/>
<rect x="807" y="252" width="1" height="3" fill="#111"/>
<rect x="812" y="252" width="1" height="3" fill="#111"/>
<rect x="818" y="252" width="1" height="3" fill="#111"/>
<rect x="823" y="252" width="1" height="3" fill="#111"/>
<rect x="829" y="252" width="1" height="3" fill="#111"/>
<rect x="835" y="252" width="1" height="3" fill="#111"/>
<rect x="840" y="252" width="1" height="3" fill="#111"/>
<rect x="620" y="252" width="1" height="5" fill="#111"/>
<rect x="622" y="252" width="1" height="5" fill="#111"/>
<rect x="650" y="252" width="1" height="5" fill="#111"/>
<rect x="678" y="252" width="1" height="5" fill="#111"/>
<rect x="706" y="252" width="1" height="5" fill="#111"/>
<rect x="734" y="252" width="1" height="5" fill="#111"/>
<rect x="762" y="252" width="1" height="5" fill="#111"/>
<rect x="790" y="252" width="1" height="5" fill="#111"/>
<rect x="818" y="252" width="1" height="5" fill="#111"/>
<rect x="843" y="252" width="1" height="5" fill="#111"/>
<rect x="622" y="252" width="1" height="5" fill="#111"/>
</svg>
<div class="t" style="right:265.5px;top:245.17px;font-size:13.5px;font-weight:normal;color:#111;text-align:right;">0,000</div>
<div class="t" style="right:265.5px;top:220.17px;font-size:13.5px;font-weight:normal;color:#111;text-align:right;">0,500</div>
<div class="t" style="right:265.5px;top:195.17px;font-size:13.5px;font-weight:normal;color:#111;text-align:right;">1,000</div>
<div class="t" style="right:265.5px;top:170.17px;font-size:13.5px;font-weight:normal;color:#111;text-align:right;">1,500</div>
<div class="t" style="right:265.5px;top:145.17px;font-size:13.5px;font-weight:normal;color:#111;text-align:right;">2,000</div>
<div class="t" style="right:265.5px;top:120.17px;font-size:13.5px;font-weight:normal;color:#111;text-align:right;">2,500</div>
<div class="t" style="right:265.5px;top:95.17px;font-size:13.5px;font-weight:normal;color:#111;text-align:right;">3,000</div>
<div class="t" style="right:265.5px;top:70.17px;font-size:13.5px;font-weight:normal;color:#111;text-align:right;">3,500</div>
<div class="t" style="right:265.5px;top:45.17px;font-size:13.5px;font-weight:normal;color:#111;text-align:right;">4,000</div>
<div class="t" style="left:419.50699999999995px;width:400px;top:259.09px;font-size:13.6px;font-weight:normal;color:#111;text-align:center;">319</div>
<div class="t" style="left:450.2299999999999px;width:400px;top:259.09px;font-size:13.6px;font-weight:normal;color:#111;text-align:center;">330</div>
<div class="t" style="left:478.15999999999997px;width:400px;top:259.09px;font-size:13.6px;font-weight:normal;color:#111;text-align:center;">340</div>
<div class="t" style="left:506.0899999999999px;width:400px;top:259.09px;font-size:13.6px;font-weight:normal;color:#111;text-align:center;">350</div>
<div class="t" style="left:534.02px;width:400px;top:259.09px;font-size:13.6px;font-weight:normal;color:#111;text-align:center;">360</div>
<div class="t" style="left:561.9499999999999px;width:400px;top:259.09px;font-size:13.6px;font-weight:normal;color:#111;text-align:center;">370</div>
<div class="t" style="left:589.88px;width:400px;top:259.09px;font-size:13.6px;font-weight:normal;color:#111;text-align:center;">380</div>
<div class="t" style="left:617.81px;width:400px;top:259.09px;font-size:13.6px;font-weight:normal;color:#111;text-align:center;">390</div>
<div class="t" style="left:642.947px;width:400px;top:259.09px;font-size:13.6px;font-weight:normal;color:#111;text-align:center;">399</div>
<div class="t" style="left:540.9px;width:400px;top:35.04px;font-size:13.3px;font-weight:normal;color:#000;text-align:center;">Current graph</div>
<div class="t" style="left:529.5px;width:400px;top:276.43px;font-size:13.2px;font-weight:normal;color:#000;text-align:center;transform:scaleX(1.04);transform-origin:center;">Read times</div>
<div class="t" style="left:516px;top:143.5px;width:100px;text-align:center;font-size:13.3px;transform:rotate(-90deg)">Current(A)</div>
<div class="t" style="left:130.7px;width:400px;top:300.39px;font-size:17.5px;font-weight:bold;color:#000;text-align:center;">Voltage</div>
<div style="position:absolute;left:279px;top:318px;width:103px;height:49px;border:1px solid #767676;border-radius:4px;background:linear-gradient(#fdfdfd,#ececec);box-shadow:inset 1px 1px 0 #fff,1px 1px 1px rgba(40,70,90,.45)"></div>
<div style="position:absolute;left:284px;top:323px;width:93px;height:39px;background:#000;border:1px solid #8f8f8f;box-shadow:0 0 0 1px #d4d4d4"></div>
<div style="position:absolute;left:287px;top:324px;width:89px;height:37px;overflow:hidden"><div class="t" style="right:6px;top:2.11px;font-size:30px;color:#00f522;transform:scaleX(0.96);transform-origin:right">05,09</div></div>
<div class="t" style="left:388.5px;top:325.36px;font-size:31px;font-weight:normal;color:#000;">V</div>
<div class="t" style="left:130px;width:400px;top:371.69px;font-size:17.5px;font-weight:bold;color:#000;text-align:center;">Current</div>
<div style="position:absolute;left:279px;top:389px;width:103px;height:49px;border:1px solid #767676;border-radius:4px;background:linear-gradient(#fdfdfd,#ececec);box-shadow:inset 1px 1px 0 #fff,1px 1px 1px rgba(40,70,90,.45)"></div>
<div style="position:absolute;left:284px;top:394px;width:93px;height:39px;background:#000;border:1px solid #8f8f8f;box-shadow:0 0 0 1px #d4d4d4"></div>
<div style="position:absolute;left:287px;top:395px;width:89px;height:37px;overflow:hidden"><div class="t" style="right:6.5px;top:2.41px;font-size:30px;color:#1452ff;transform:scaleX(0.96);transform-origin:right">0,069</div></div>
<div class="t" style="left:387.5px;top:397.26px;font-size:31px;font-weight:normal;color:#000;">A</div>
<div class="t" style="left:129.60000000000002px;width:400px;top:442.39px;font-size:17.5px;font-weight:bold;color:#000;text-align:center;">Power</div>
<div style="position:absolute;left:279px;top:460px;width:103px;height:49px;border:1px solid #767676;border-radius:4px;background:linear-gradient(#fdfdfd,#ececec);box-shadow:inset 1px 1px 0 #fff,1px 1px 1px rgba(40,70,90,.45)"></div>
<div style="position:absolute;left:284px;top:465px;width:93px;height:39px;background:#000;border:1px solid #8f8f8f;box-shadow:0 0 0 1px #d4d4d4"></div>
<div style="position:absolute;left:287px;top:466px;width:89px;height:36px;overflow:hidden"><div class="t" style="right:8.5px;top:2.21px;font-size:30px;color:#f4f400;transform:scaleX(0.96);transform-origin:right">00,351</div></div>
<div class="t" style="left:384.5px;top:469.61px;font-size:30px;font-weight:normal;color:#000;transform:scaleX(1.05);transform-origin:left;">W</div>
<div class="t" style="left:126px;width:400px;top:511.69px;font-size:17.5px;font-weight:bold;color:#000;text-align:center;">Impedance</div>
<div style="position:absolute;left:279px;top:529px;width:103px;height:49px;border:1px solid #767676;border-radius:4px;background:linear-gradient(#fdfdfd,#ececec);box-shadow:inset 1px 1px 0 #fff,1px 1px 1px rgba(40,70,90,.45)"></div>
<div style="position:absolute;left:284px;top:534px;width:93px;height:39px;background:#000;border:1px solid #8f8f8f;box-shadow:0 0 0 1px #d4d4d4"></div>
<div style="position:absolute;left:287px;top:535px;width:89px;height:37px;overflow:hidden"><div class="t" style="right:8.5px;top:3.61px;font-size:30px;color:#8ccaee;transform:scaleX(0.96);transform-origin:right">0073,7</div></div>
<div class="t" style="left:387.5px;top:542.18px;font-size:24px;font-weight:normal;color:#000;">&#937;</div>
<div class="t" style="left:432.3px;top:313.77px;font-size:13.5px;font-weight:bold;color:#000;">Capacity record</div>
<div class="nb" style="left:435px;top:335px;width:75px;height:39px"></div>
<div class="nbi" style="left:440px;top:339px;width:66px;height:31px;background:#d6d6d6"></div>
<div style="position:absolute;left:444px;top:340px;width:60px;height:28px;overflow:hidden"><div class="t" style="right:5.5px;top:3.52px;font-size:21px;color:#111;transform:scaleX(1.0);transform-origin:right">00005</div></div>
<div class="t" style="left:512px;top:345.85px;font-size:14px;font-weight:bold;color:#000;">mAh</div>
<div class="t" style="left:430.6px;top:383.99px;font-size:13.6px;font-weight:bold;color:#000;">Energy record</div>
<div class="nb" style="left:435px;top:406px;width:75px;height:38px"></div>
<div class="nbi" style="left:440px;top:410px;width:66px;height:30px;background:#d6d6d6"></div>
<div style="position:absolute;left:444px;top:411px;width:60px;height:27px;overflow:hidden"><div class="t" style="right:6px;top:2.52px;font-size:21px;color:#111;transform:scaleX(1.0);transform-origin:right">00030</div></div>
<div class="t" style="left:512px;top:415.85px;font-size:14px;font-weight:bold;color:#000;">mWh</div>
<div class="t" style="left:434px;top:451.83px;font-size:13.2px;font-weight:bold;color:#000;">Stop current</div>
<div class="nb" style="left:435px;top:474px;width:76px;height:38px"></div>
<div style="position:absolute;left:441px;top:478px;width:12px;height:9px;border:1px solid #a8a8a8;border-radius:2px;background:linear-gradient(#fcfcfc,#e8e8e8)"></div>
<div style="position:absolute;left:441px;top:498px;width:12px;height:9px;border:1px solid #a8a8a8;border-radius:2px;background:linear-gradient(#fcfcfc,#e8e8e8)"></div>
<svg width="8" height="5" style="left:443px;top:480px"><path d="M1 4 L4 1 L7 4Z" fill="#777"/></svg>
<svg width="8" height="5" style="left:443px;top:500px"><path d="M1 1 L4 4 L7 1Z" fill="#777"/></svg>
<div class="nbi" style="left:456px;top:477px;width:51px;height:30px"></div>
<div class="t" style="left:460.5px;top:481.95px;font-size:20.5px;font-weight:normal;color:#111;">0,00</div>
<div class="t" style="left:516.5px;top:485.77px;font-size:13.5px;font-weight:bold;color:#000;">A</div>
<div class="t" style="left:437.3px;top:523.24px;font-size:13.3px;font-weight:bold;color:#000;">Time record</div>
<div class="nb" style="left:435px;top:541px;width:95px;height:39px"></div>
<div class="nbi" style="left:440px;top:545px;width:87px;height:30px;background:#d6d6d6"></div>
<div style="position:absolute;left:441px;top:546px;width:80px;height:27px;overflow:hidden"><div class="t" style="right:-79px;top:2.10px;font-size:21.5px;color:#111;transform:scaleX(1.0);transform-origin:right"><span style="position:absolute;left:-155px">00:05:12</span></div></div>
<div class="t" style="left:435px;width:400px;top:301.92px;font-size:13.8px;font-weight:bold;color:#000;text-align:center;">Brightness level</div>
<div style="position:absolute;left:564px;top:320px;width:137px;height:42px;border:1px solid #8c8c8c;border-radius:5px;background:linear-gradient(#ececec,#d2d2d2);box-shadow:inset 1px 1px 0 #fff,1px 1px 1px rgba(40,70,90,.45)"></div>
<div style="position:absolute;left:571px;top:330px;width:124px;height:10px;border-radius:5px;background:#7a7a7a;overflow:hidden;box-shadow:0 1px 0 #eef2fa"><div style="position:absolute;left:0;top:0;width:98px;height:10px;background:#fbb918"></div></div>
<svg width="12" height="12" style="left:663.0px;top:320px" viewBox="0 0 12 12"><path d="M0.5 0.5 L10.5 0.5 L10.5 6 L5.5 10.5 L0.5 6Z" fill="#fafafa" stroke="#9a9a9a" stroke-width="1"/><path d="M3 3 L8 3 L5.5 6Z" fill="#555"/></svg>
<div style="position:absolute;left:575.0px;top:343px;width:2px;height:5px;background:#3c3c3c"></div>
<div class="t" style="left:376.0px;width:400px;top:348.17px;font-size:13.5px;font-weight:normal;color:#111;text-align:center;">0</div>
<div style="position:absolute;left:597.9px;top:343px;width:2px;height:5px;background:#3c3c3c"></div>
<div class="t" style="left:398.86px;width:400px;top:348.17px;font-size:13.5px;font-weight:normal;color:#111;text-align:center;">1</div>
<div style="position:absolute;left:620.7px;top:343px;width:2px;height:5px;background:#3c3c3c"></div>
<div class="t" style="left:421.72px;width:400px;top:348.17px;font-size:13.5px;font-weight:normal;color:#111;text-align:center;">2</div>
<div style="position:absolute;left:643.6px;top:343px;width:2px;height:5px;background:#3c3c3c"></div>
<div class="t" style="left:444.5799999999999px;width:400px;top:348.17px;font-size:13.5px;font-weight:normal;color:#111;text-align:center;">3</div>
<div style="position:absolute;left:666.4px;top:343px;width:2px;height:5px;background:#3c3c3c"></div>
<div class="t" style="left:467.43999999999994px;width:400px;top:348.17px;font-size:13.5px;font-weight:normal;color:#111;text-align:center;">4</div>
<div style="position:absolute;left:689.3px;top:343px;width:2px;height:5px;background:#3c3c3c"></div>
<div class="t" style="left:490.29999999999995px;width:400px;top:348.17px;font-size:13.5px;font-weight:normal;color:#111;text-align:center;">5</div>
<div class="t" style="left:434.70000000000005px;width:400px;top:368.52px;font-size:13.8px;font-weight:bold;color:#000;text-align:center;">Auto screen off</div>
<div style="position:absolute;left:564px;top:386px;width:137px;height:42px;border:1px solid #8c8c8c;border-radius:5px;background:linear-gradient(#ececec,#d2d2d2);box-shadow:inset 1px 1px 0 #fff,1px 1px 1px rgba(40,70,90,.45)"></div>
<div style="position:absolute;left:571px;top:396px;width:124px;height:10px;border-radius:5px;background:#7a7a7a;overflow:hidden;box-shadow:0 1px 0 #eef2fa"><div style="position:absolute;left:0;top:0;width:19px;height:10px;background:#fbb918"></div></div>
<svg width="12" height="12" style="left:584.0px;top:386px" viewBox="0 0 12 12"><path d="M0.5 0.5 L10.5 0.5 L10.5 6 L5.5 10.5 L0.5 6Z" fill="#fafafa" stroke="#9a9a9a" stroke-width="1"/><path d="M3 3 L8 3 L5.5 6Z" fill="#555"/></svg>
<div style="position:absolute;left:575.0px;top:409px;width:2px;height:5px;background:#3c3c3c"></div>
<div class="t" style="left:376.0px;width:400px;top:414.17px;font-size:13.5px;font-weight:normal;color:#111;text-align:center;">0</div>
<div style="position:absolute;left:587.7px;top:409px;width:2px;height:5px;background:#3c3c3c"></div>
<div class="t" style="left:388.70000000000005px;width:400px;top:414.17px;font-size:13.5px;font-weight:normal;color:#111;text-align:center;">1</div>
<div style="position:absolute;left:600.4px;top:409px;width:2px;height:5px;background:#3c3c3c"></div>
<div class="t" style="left:401.4px;width:400px;top:414.17px;font-size:13.5px;font-weight:normal;color:#111;text-align:center;">2</div>
<div style="position:absolute;left:613.1px;top:409px;width:2px;height:5px;background:#3c3c3c"></div>
<div class="t" style="left:414.1px;width:400px;top:414.17px;font-size:13.5px;font-weight:normal;color:#111;text-align:center;">3</div>
<div style="position:absolute;left:625.8px;top:409px;width:2px;height:5px;background:#3c3c3c"></div>
<div class="t" style="left:426.79999999999995px;width:400px;top:414.17px;font-size:13.5px;font-weight:normal;color:#111;text-align:center;">4</div>
<div style="position:absolute;left:638.5px;top:409px;width:2px;height:5px;background:#3c3c3c"></div>
<div class="t" style="left:439.5px;width:400px;top:414.17px;font-size:13.5px;font-weight:normal;color:#111;text-align:center;">5</div>
<div style="position:absolute;left:651.2px;top:409px;width:2px;height:5px;background:#3c3c3c"></div>
<div class="t" style="left:452.19999999999993px;width:400px;top:414.17px;font-size:13.5px;font-weight:normal;color:#111;text-align:center;">6</div>
<div style="position:absolute;left:663.9px;top:409px;width:2px;height:5px;background:#3c3c3c"></div>
<div class="t" style="left:464.9px;width:400px;top:414.17px;font-size:13.5px;font-weight:normal;color:#111;text-align:center;">7</div>
<div style="position:absolute;left:676.6px;top:409px;width:2px;height:5px;background:#3c3c3c"></div>
<div class="t" style="left:477.5999999999999px;width:400px;top:414.17px;font-size:13.5px;font-weight:normal;color:#111;text-align:center;">8</div>
<div style="position:absolute;left:689.3px;top:409px;width:2px;height:5px;background:#3c3c3c"></div>
<div class="t" style="left:490.29999999999995px;width:400px;top:414.17px;font-size:13.5px;font-weight:normal;color:#111;text-align:center;">9</div>
<div class="t" style="left:556.5px;top:459.42px;font-size:18.4px;font-weight:normal;color:#000;">USB D+</div>
<div class="nb" style="left:625px;top:449px;width:59px;height:36px"></div>
<div class="nbi" style="left:630px;top:453px;width:49px;height:27px;background:#d6d6d6"></div>
<div class="t" style="right:204.79999999999995px;top:459.30px;font-size:17.6px;font-weight:normal;color:#111;text-align:right;">0,00</div>
<div class="t" style="left:685.5px;top:459.39px;font-size:18.2px;font-weight:normal;color:#000;">V</div>
<div class="t" style="left:556.5px;top:504.92px;font-size:18.4px;font-weight:normal;color:#000;">USB D-</div>
<div class="nb" style="left:625px;top:495px;width:59px;height:36px"></div>
<div class="nbi" style="left:630px;top:499px;width:49px;height:27px;background:#d6d6d6"></div>
<div class="t" style="right:204.79999999999995px;top:505.40px;font-size:17.6px;font-weight:normal;color:#111;text-align:right;">0,00</div>
<div class="t" style="left:685.5px;top:505.09px;font-size:18.2px;font-weight:normal;color:#000;">V</div>
<div class="nb" style="left:564px;top:543px;width:134px;height:35px"></div>
<div class="nbi" style="left:569px;top:548px;width:124px;height:25px;background:#d6d6d6"></div>
<div class="t" style="left:430.5px;width:400px;top:553.11px;font-size:14.4px;font-weight:normal;color:#111;text-align:center;">Unknown Mode</div>
<div style="position:absolute;left:729px;top:333px;width:55px;height:251px;border:1px solid #8e8e8e;border-radius:5px;background:linear-gradient(90deg,#e2e2e2,#d8d8d8 30%,#d8d8d8);box-shadow:inset 1px 1px 0 #fafafa,1px 1px 1px rgba(40,70,90,.45)"></div>
<div class="t" style="right:122.5px;top:565.85px;font-size:14px;font-weight:normal;color:#111;text-align:right;transform:scaleX(0.9);transform-origin:right;">0</div>
<div class="t" style="right:122.5px;top:543.19px;font-size:14px;font-weight:normal;color:#111;text-align:right;transform:scaleX(0.9);transform-origin:right;">10</div>
<div class="t" style="right:122.5px;top:520.53px;font-size:14px;font-weight:normal;color:#111;text-align:right;transform:scaleX(0.9);transform-origin:right;">20</div>
<div class="t" style="right:122.5px;top:497.87px;font-size:14px;font-weight:normal;color:#111;text-align:right;transform:scaleX(0.9);transform-origin:right;">30</div>
<div class="t" style="right:122.5px;top:475.21px;font-size:14px;font-weight:normal;color:#111;text-align:right;transform:scaleX(0.9);transform-origin:right;">40</div>
<div class="t" style="right:122.5px;top:452.55px;font-size:14px;font-weight:normal;color:#111;text-align:right;transform:scaleX(0.9);transform-origin:right;">50</div>
<div class="t" style="right:122.5px;top:429.89px;font-size:14px;font-weight:normal;color:#111;text-align:right;transform:scaleX(0.9);transform-origin:right;">60</div>
<div class="t" style="right:122.5px;top:407.23px;font-size:14px;font-weight:normal;color:#111;text-align:right;transform:scaleX(0.9);transform-origin:right;">70</div>
<div class="t" style="right:122.5px;top:384.57px;font-size:14px;font-weight:normal;color:#111;text-align:right;transform:scaleX(0.9);transform-origin:right;">80</div>
<div class="t" style="right:122.5px;top:361.91px;font-size:14px;font-weight:normal;color:#111;text-align:right;transform:scaleX(0.9);transform-origin:right;">90</div>
<div class="t" style="right:122.5px;top:339.25px;font-size:14px;font-weight:normal;color:#111;text-align:right;transform:scaleX(0.9);transform-origin:right;">100</div>
<svg width="877" height="598" style="left:0;top:0"><rect x="756" y="571.40" width="5" height="1.5" fill="#1a1a1a"/><rect x="756" y="548.74" width="5" height="1.5" fill="#1a1a1a"/><rect x="756" y="526.08" width="5" height="1.5" fill="#1a1a1a"/><rect x="756" y="503.42" width="5" height="1.5" fill="#1a1a1a"/><rect x="756" y="480.76" width="5" height="1.5" fill="#1a1a1a"/><rect x="756" y="458.10" width="5" height="1.5" fill="#1a1a1a"/><rect x="756" y="435.44" width="5" height="1.5" fill="#1a1a1a"/><rect x="756" y="412.78" width="5" height="1.5" fill="#1a1a1a"/><rect x="756" y="390.12" width="5" height="1.5" fill="#1a1a1a"/><rect x="756" y="367.46" width="5" height="1.5" fill="#1a1a1a"/><rect x="756" y="344.80" width="5" height="1.5" fill="#1a1a1a"/><rect x="758" y="566.87" width="3" height="1.5" fill="#2a2a2a"/><rect x="758" y="562.34" width="3" height="1.5" fill="#2a2a2a"/><rect x="758" y="557.80" width="3" height="1.5" fill="#2a2a2a"/><rect x="758" y="553.27" width="3" height="1.5" fill="#2a2a2a"/><rect x="758" y="544.21" width="3" height="1.5" fill="#2a2a2a"/><rect x="758" y="539.68" width="3" height="1.5" fill="#2a2a2a"/><rect x="758" y="535.14" width="3" height="1.5" fill="#2a2a2a"/><rect x="758" y="530.61" width="3" height="1.5" fill="#2a2a2a"/><rect x="758" y="521.55" width="3" height="1.5" fill="#2a2a2a"/><rect x="758" y="517.02" width="3" height="1.5" fill="#2a2a2a"/><rect x="758" y="512.48" width="3" height="1.5" fill="#2a2a2a"/><rect x="758" y="507.95" width="3" height="1.5" fill="#2a2a2a"/><rect x="758" y="498.89" width="3" height="1.5" fill="#2a2a2a"/><rect x="758" y="494.36" width="3" height="1.5" fill="#2a2a2a"/><rect x="758" y="489.82" width="3" height="1.5" fill="#2a2a2a"/><rect x="758" y="485.29" width="3" height="1.5" fill="#2a2a2a"/><rect x="758" y="476.23" width="3" height="1.5" fill="#2a2a2a"/><rect x="758" y="471.70" width="3" height="1.5" fill="#2a2a2a"/><rect x="758" y="467.16" width="3" height="1.5" fill="#2a2a2a"/><rect x="758" y="462.63" width="3" height="1.5" fill="#2a2a2a"/><rect x="758" y="453.57" width="3" height="1.5" fill="#2a2a2a"/><rect x="758" y="449.04" width="3" height="1.5" fill="#2a2a2a"/><rect x="758" y="444.50" width="3" height="1.5" fill="#2a2a2a"/><rect x="758" y="439.97" width="3" height="1.5" fill="#2a2a2a"/><rect x="758" y="430.91" width="3" height="1.5" fill="#2a2a2a"/><rect x="758" y="426.38" width="3" height="1.5" fill="#2a2a2a"/><rect x="758" y="421.84" width="3" height="1.5" fill="#2a2a2a"/><rect x="758" y="417.31" width="3" height="1.5" fill="#2a2a2a"/><rect x="758" y="408.25" width="3" height="1.5" fill="#2a2a2a"/><rect x="758" y="403.72" width="3" height="1.5" fill="#2a2a2a"/><rect x="758" y="399.18" width="3" height="1.5" fill="#2a2a2a"/><rect x="758" y="394.65" width="3" height="1.5" fill="#2a2a2a"/><rect x="758" y="385.59" width="3" height="1.5" fill="#2a2a2a"/><rect x="758" y="381.06" width="3" height="1.5" fill="#2a2a2a"/><rect x="758" y="376.52" width="3" height="1.5" fill="#2a2a2a"/><rect x="758" y="371.99" width="3" height="1.5" fill="#2a2a2a"/><rect x="758" y="362.93" width="3" height="1.5" fill="#2a2a2a"/><rect x="758" y="358.40" width="3" height="1.5" fill="#2a2a2a"/><rect x="758" y="353.86" width="3" height="1.5" fill="#2a2a2a"/><rect x="758" y="349.33" width="3" height="1.5" fill="#2a2a2a"/></svg>
<div style="position:absolute;left:763px;top:341px;width:11px;height:236px;border-radius:5.5px;background:linear-gradient(90deg,#b4b4b4 0%,#e4e4e4 15%,#f4f4f4 35%,#e6e6e6 60%,#bdbdbd 82%,#8a8a8a 100%)"></div>
<div style="position:absolute;left:763px;top:517.7px;width:11px;height:59.3px;border-radius:0 0 5.5px 5.5px;background:linear-gradient(90deg,#c00000 0%,#f40000 20%,#ff2020 40%,#e80000 70%,#a00000 100%)"></div>
<div style="position:absolute;left:798px;top:333px;width:55px;height:251px;border:1px solid #8e8e8e;border-radius:5px;background:linear-gradient(90deg,#e2e2e2,#d8d8d8 30%,#d8d8d8);box-shadow:inset 1px 1px 0 #fafafa,1px 1px 1px rgba(40,70,90,.45)"></div>
<div class="t" style="right:53.5px;top:565.85px;font-size:14px;font-weight:normal;color:#111;text-align:right;transform:scaleX(0.9);transform-origin:right;">0</div>
<div class="t" style="right:53.5px;top:543.19px;font-size:14px;font-weight:normal;color:#111;text-align:right;transform:scaleX(0.9);transform-origin:right;">20</div>
<div class="t" style="right:53.5px;top:520.53px;font-size:14px;font-weight:normal;color:#111;text-align:right;transform:scaleX(0.9);transform-origin:right;">40</div>
<div class="t" style="right:53.5px;top:497.87px;font-size:14px;font-weight:normal;color:#111;text-align:right;transform:scaleX(0.9);transform-origin:right;">60</div>
<div class="t" style="right:53.5px;top:475.21px;font-size:14px;font-weight:normal;color:#111;text-align:right;transform:scaleX(0.9);transform-origin:right;">80</div>
<div class="t" style="right:53.5px;top:452.55px;font-size:14px;font-weight:normal;color:#111;text-align:right;transform:scaleX(0.9);transform-origin:right;">100</div>
<div class="t" style="right:53.5px;top:429.89px;font-size:14px;font-weight:normal;color:#111;text-align:right;transform:scaleX(0.9);transform-origin:right;">120</div>
<div class="t" style="right:53.5px;top:407.23px;font-size:14px;font-weight:normal;color:#111;text-align:right;transform:scaleX(0.9);transform-origin:right;">140</div>
<div class="t" style="right:53.5px;top:384.57px;font-size:14px;font-weight:normal;color:#111;text-align:right;transform:scaleX(0.9);transform-origin:right;">160</div>
<div class="t" style="right:53.5px;top:361.91px;font-size:14px;font-weight:normal;color:#111;text-align:right;transform:scaleX(0.9);transform-origin:right;">180</div>
<div class="t" style="right:53.5px;top:339.25px;font-size:14px;font-weight:normal;color:#111;text-align:right;transform:scaleX(0.9);transform-origin:right;">200</div>
<svg width="877" height="598" style="left:0;top:0"><rect x="826" y="571.40" width="5" height="1.5" fill="#1a1a1a"/><rect x="826" y="548.74" width="5" height="1.5" fill="#1a1a1a"/><rect x="826" y="526.08" width="5" height="1.5" fill="#1a1a1a"/><rect x="826" y="503.42" width="5" height="1.5" fill="#1a1a1a"/><rect x="826" y="480.76" width="5" height="1.5" fill="#1a1a1a"/><rect x="826" y="458.10" width="5" height="1.5" fill="#1a1a1a"/><rect x="826" y="435.44" width="5" height="1.5" fill="#1a1a1a"/><rect x="826" y="412.78" width="5" height="1.5" fill="#1a1a1a"/><rect x="826" y="390.12" width="5" height="1.5" fill="#1a1a1a"/><rect x="826" y="367.46" width="5" height="1.5" fill="#1a1a1a"/><rect x="826" y="344.80" width="5" height="1.5" fill="#1a1a1a"/><rect x="828" y="566.87" width="3" height="1.5" fill="#2a2a2a"/><rect x="828" y="562.34" width="3" height="1.5" fill="#2a2a2a"/><rect x="828" y="557.80" width="3" height="1.5" fill="#2a2a2a"/><rect x="828" y="553.27" width="3" height="1.5" fill="#2a2a2a"/><rect x="828" y="544.21" width="3" height="1.5" fill="#2a2a2a"/><rect x="828" y="539.68" width="3" height="1.5" fill="#2a2a2a"/><rect x="828" y="535.14" width="3" height="1.5" fill="#2a2a2a"/><rect x="828" y="530.61" width="3" height="1.5" fill="#2a2a2a"/><rect x="828" y="521.55" width="3" height="1.5" fill="#2a2a2a"/><rect x="828" y="517.02" width="3" height="1.5" fill="#2a2a2a"/><rect x="828" y="512.48" width="3" height="1.5" fill="#2a2a2a"/><rect x="828" y="507.95" width="3" height="1.5" fill="#2a2a2a"/><rect x="828" y="498.89" width="3" height="1.5" fill="#2a2a2a"/><rect x="828" y="494.36" width="3" height="1.5" fill="#2a2a2a"/><rect x="828" y="489.82" width="3" height="1.5" fill="#2a2a2a"/><rect x="828" y="485.29" width="3" height="1.5" fill="#2a2a2a"/><rect x="828" y="476.23" width="3" height="1.5" fill="#2a2a2a"/><rect x="828" y="471.70" width="3" height="1.5" fill="#2a2a2a"/><rect x="828" y="467.16" width="3" height="1.5" fill="#2a2a2a"/><rect x="828" y="462.63" width="3" height="1.5" fill="#2a2a2a"/><rect x="828" y="453.57" width="3" height="1.5" fill="#2a2a2a"/><rect x="828" y="449.04" width="3" height="1.5" fill="#2a2a2a"/><rect x="828" y="444.50" width="3" height="1.5" fill="#2a2a2a"/><rect x="828" y="439.97" width="3" height="1.5" fill="#2a2a2a"/><rect x="828" y="430.91" width="3" height="1.5" fill="#2a2a2a"/><rect x="828" y="426.38" width="3" height="1.5" fill="#2a2a2a"/><rect x="828" y="421.84" width="3" height="1.5" fill="#2a2a2a"/><rect x="828" y="417.31" width="3" height="1.5" fill="#2a2a2a"/><rect x="828" y="408.25" width="3" height="1.5" fill="#2a2a2a"/><rect x="828" y="403.72" width="3" height="1.5" fill="#2a2a2a"/><rect x="828" y="399.18" width="3" height="1.5" fill="#2a2a2a"/><rect x="828" y="394.65" width="3" height="1.5" fill="#2a2a2a"/><rect x="828" y="385.59" width="3" height="1.5" fill="#2a2a2a"/><rect x="828" y="381.06" width="3" height="1.5" fill="#2a2a2a"/><rect x="828" y="376.52" width="3" height="1.5" fill="#2a2a2a"/><rect x="828" y="371.99" width="3" height="1.5" fill="#2a2a2a"/><rect x="828" y="362.93" width="3" height="1.5" fill="#2a2a2a"/><rect x="828" y="358.40" width="3" height="1.5" fill="#2a2a2a"/><rect x="828" y="353.86" width="3" height="1.5" fill="#2a2a2a"/><rect x="828" y="349.33" width="3" height="1.5" fill="#2a2a2a"/></svg>
<div style="position:absolute;left:832px;top:341px;width:11px;height:236px;border-radius:5.5px;background:linear-gradient(90deg,#b4b4b4 0%,#e4e4e4 15%,#f4f4f4 35%,#e6e6e6 60%,#bdbdbd 82%,#8a8a8a 100%)"></div>
<div style="position:absolute;left:832px;top:487.1px;width:11px;height:89.9px;border-radius:0 0 5.5px 5.5px;background:linear-gradient(90deg,#c00000 0%,#f40000 20%,#ff2020 40%,#e80000 70%,#a00000 100%)"></div>
<div class="nb" style="left:729px;top:300px;width:38px;height:31px"></div>
<div class="nbi" style="left:734px;top:304px;width:29px;height:23px;background:#d6d6d6"></div>
<div class="t" style="right:120.5px;top:309.27px;font-size:13.5px;font-weight:normal;color:#111;text-align:right;">24</div>
<div class="t" style="left:773.5px;top:307.43px;font-size:16.5px;font-weight:normal;color:#000;">&#176;C</div>
<div class="nb" style="left:798px;top:300px;width:38px;height:31px"></div>
<div class="nbi" style="left:803px;top:304px;width:29px;height:23px;background:#d6d6d6"></div>
<div class="t" style="right:51.299999999999955px;top:309.27px;font-size:13.5px;font-weight:normal;color:#111;text-align:right;">75</div>
<div class="t" style="left:842.5px;top:306.73px;font-size:16.5px;font-weight:normal;color:#000;">&#176;F</div>
</body></html>
